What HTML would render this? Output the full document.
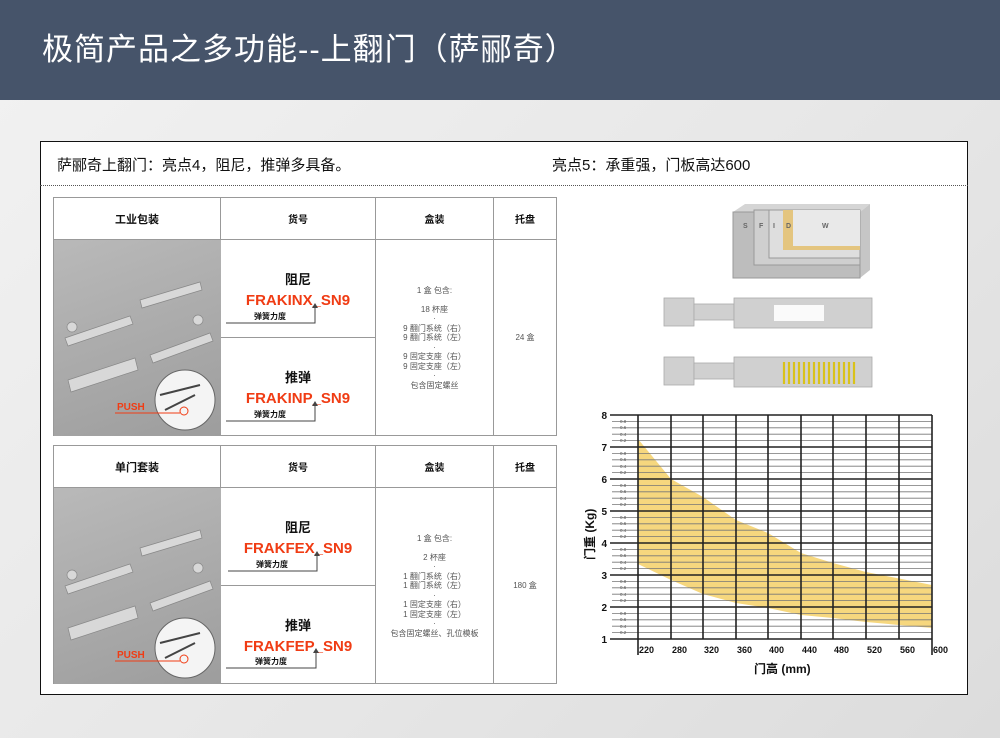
<!DOCTYPE html>
<html><head><meta charset="utf-8"><style>
*{margin:0;padding:0;box-sizing:border-box}
body{width:1000px;height:738px;overflow:hidden;position:relative;font-family:"Liberation Sans","Noto Sans CJK SC",sans-serif;background:linear-gradient(135deg,#f2f2f2,#e6e6e6 60%,#dcdcdc)}
.hdr{position:absolute;left:0;top:0;width:1000px;height:100px;background:#46546a;color:#fff;font-size:31px;line-height:100px;padding-left:42px;letter-spacing:1px;font-family:"Liberation Sans","WenQuanYi Zen Hei",sans-serif}
.box{position:absolute;left:40px;top:141px;width:928px;height:554px;background:#fff;border:1.5px solid #111}
.a{position:absolute}
.t{font-size:15px;color:#111;top:154px}
.dash{position:absolute;left:40px;top:185px;width:928px;border-top:1px dotted #555}
.tb{position:absolute;border:1px solid #999;background:#fff}
.c{position:absolute;border-right:1px solid #999;border-bottom:1px solid #999;text-align:center;display:flex;align-items:center;justify-content:center;flex-direction:column}
.hd{font-size:10px;font-weight:bold;color:#111}
.nm{font-size:13px;font-weight:bold;color:#111}
.code{font-size:15px;font-weight:bold;color:#f03c14;margin-top:4px}
.sm{font-size:8px;color:#555;line-height:9.5px}
.spr{position:absolute;font-size:8px;font-weight:bold;color:#111}
.photo{position:absolute;background:linear-gradient(160deg,#b9b9b9,#9d9d9d)}
</style></head><body>
<div class="hdr">极简产品之多功能--上翻门（萨郦奇）</div>
<div class="box"></div>
<div class="a t" style="left:57px">萨郦奇上翻门：亮点4，阻尼，推弹多具备。</div>
<div class="a t" style="left:552px">亮点5：承重强，门板高达600</div>
<div class="dash"></div>

<!-- table 1 -->
<div class="tb" style="left:53px;top:197px;width:504px;height:239px">
 <div class="c hd" style="left:0;top:0;width:167px;height:42px;font-size:11px">工业包装</div>
 <div class="c hd" style="left:167px;top:0;width:155px;height:42px">货号</div>
 <div class="c hd" style="left:322px;top:0;width:118px;height:42px">盒装</div>
 <div class="c hd" style="left:440px;top:0;width:62px;height:42px;border-right:none">托盘</div>
 <div class="photo" style="left:0;top:42px;width:167px;height:196px"></div>
 <div class="c" style="left:167px;top:42px;width:155px;height:98px"><div class="nm">阻尼</div><div class="code">FRAKINX_SN9</div></div>
 <div class="c" style="left:167px;top:140px;width:155px;height:98px;border-bottom:none"><div class="nm">推弹</div><div class="code">FRAKINP_SN9</div></div>
 <div class="c" style="left:322px;top:42px;width:118px;height:196px;border-bottom:none"><div class="sm">1 盒 包含:<br><br>18 杯座<br>·<br>9 翻门系统（右）<br>9 翻门系统（左）<br>·<br>9 固定支座（右）<br>9 固定支座（左）<br>·<br>包含固定螺丝</div></div>
 <div class="c sm" style="left:440px;top:42px;width:62px;height:196px;border:none">24 盒</div>
</div>
<!-- table 2 -->
<div class="tb" style="left:53px;top:445px;width:504px;height:239px">
 <div class="c hd" style="left:0;top:0;width:167px;height:42px;font-size:11px">单门套装</div>
 <div class="c hd" style="left:167px;top:0;width:155px;height:42px">货号</div>
 <div class="c hd" style="left:322px;top:0;width:118px;height:42px">盒装</div>
 <div class="c hd" style="left:440px;top:0;width:62px;height:42px;border-right:none">托盘</div>
 <div class="photo" style="left:0;top:42px;width:167px;height:196px"></div>
 <div class="c" style="left:167px;top:42px;width:155px;height:98px"><div class="nm">阻尼</div><div class="code">FRAKFEX_SN9</div></div>
 <div class="c" style="left:167px;top:140px;width:155px;height:98px;border-bottom:none"><div class="nm">推弹</div><div class="code">FRAKFEP_SN9</div></div>
 <div class="c" style="left:322px;top:42px;width:118px;height:196px;border-bottom:none"><div class="sm">1 盒 包含:<br><br>2 杯座<br>·<br>1 翻门系统（右）<br>1 翻门系统（左）<br>·<br>1 固定支座（右）<br>1 固定支座（左）<br>·<br>包含固定螺丝、孔位模板</div></div>
 <div class="c sm" style="left:440px;top:42px;width:62px;height:196px;border:none">180 盒</div>
</div>

<!-- spring labels + arrows, photos -->
<svg class="a" style="left:0;top:0" width="1000" height="738">
 <g fill="none" stroke="#444" stroke-width="1">
  <path d="M226 323H315V307"/><path d="M226 421H315V405"/>
  <path d="M228 571H317V555"/><path d="M226 668H316V652"/>
 </g>
 <g fill="#444"><path d="M312 308l3-5 3 5z"/><path d="M312 406l3-5 3 5z"/><path d="M314 556l3-5 3 5z"/><path d="M313 653l3-5 3 5z"/></g>
 <!-- hinges photo 1 -->
 <g id="h">
  <g fill="#d8d8d8" stroke="#888" stroke-width=".7">
   <path d="M140 300l60-18 2 8-60 18z"/><path d="M65 338l65-22 3 8-65 22z"/>
   <path d="M68 380l67-22 3 12-67 22z"/><path d="M150 355l60-22 3 8-60 22z"/>
   <circle cx="72" cy="327" r="5"/><circle cx="198" cy="320" r="5"/>
  </g>
  <circle cx="185" cy="400" r="30" fill="#f4f4f4" stroke="#666"/>
  <path d="M160 395l40-10M165 410l30-15" stroke="#444" stroke-width="2" fill="none"/>
  <text x="117" y="410" font-size="10" font-weight="bold" fill="#f03c14" font-family="Liberation Sans">PUSH</text>
  <path d="M115 413h65" stroke="#f03c14"/><circle cx="184" cy="411" r="4" fill="none" stroke="#f03c14"/>
 </g>
 <use href="#h" y="248"/>
 <!-- top-right diagrams -->
 <path d="M733 212l12-8h125l-10 8z" fill="#d5d5d5"/><path d="M860 212l10-8v66l-10 8z" fill="#c6c6c6"/>
 <rect x="733" y="212" width="127" height="66" fill="#bdbdbd" stroke="#999"/>
 <rect x="754" y="210" width="106" height="55" fill="#cfcfcf" stroke="#999"/>
 <rect x="769" y="210" width="91" height="48" fill="#dedede" stroke="#999"/>
 <rect x="783" y="210" width="77" height="40" fill="#e4c57f"/>
 <rect x="793" y="210" width="67" height="36" fill="#e9e9e9"/>
 <g font-size="7" fill="#666" font-weight="bold" font-family="Liberation Sans"><text x="743" y="228">S</text><text x="759" y="228">F</text><text x="773" y="228">I</text><text x="786" y="228">D</text><text x="822" y="228">W</text></g>
 <g fill="#d0d0d0" stroke="#aaa" stroke-width=".8">
  <rect x="664" y="298" width="30" height="28"/><rect x="694" y="304" width="40" height="16"/><rect x="734" y="298" width="138" height="30"/>
  <rect x="664" y="357" width="30" height="28"/><rect x="694" y="363" width="40" height="16"/><rect x="734" y="357" width="138" height="30"/>
 </g>
 <rect x="774" y="305" width="50" height="16" fill="#fafafa"/>
 <g stroke="#d9c21a" stroke-width="2.2"><path d="M784 362v22M789 362v22M794 362v22M799 362v22M804 362v22M809 362v22M814 362v22M819 362v22M824 362v22M829 362v22M834 362v22M839 362v22M844 362v22M849 362v22M854 362v22"/></g>
 <!-- chart -->
 <path d="M638 439L671 479 703 497 736 520 768 533 801 553 833 563 866 572 932 585 932 628 866 622 833 618 801 615 768 608 736 603 703 594 671 580 638 564Z" fill="#f6d77e"/>
 <g stroke="#777" stroke-width=".8">
  <path d="M612 421.4H932M612 427.8H932M612 434.2H932M612 440.6H932M612 453.4H932M612 459.8H932M612 466.2H932M612 472.6H932M612 485.4H932M612 491.8H932M612 498.2H932M612 504.6H932M612 517.4H932M612 523.8H932M612 530.2H932M612 536.6H932M612 549.4H932M612 555.8H932M612 562.2H932M612 568.6H932M612 581.4H932M612 587.8H932M612 594.2H932M612 600.6H932M612 613.4H932M612 619.8H932M612 626.2H932M612 632.6H932"/>
 </g>
 <g stroke="#222" stroke-width="1.6">
  <path d="M610 415H932M610 447H932M610 479H932M610 511H932M610 543H932M610 575H932M610 607H932M610 639H932"/>
  <path d="M638 415V655M671 415V639M703 415V639M736 415V639M768 415V639M801 415V639M833 415V639M866 415V639M899 415V639M932 415V655"/>
 </g>
 <g font-size="10" font-weight="bold" fill="#111" font-family="Liberation Sans" text-anchor="end">
  <text x="607" y="419">8</text><text x="607" y="451">7</text><text x="607" y="483">6</text><text x="607" y="515">5</text><text x="607" y="547">4</text><text x="607" y="579">3</text><text x="607" y="611">2</text><text x="607" y="643">1</text>
 </g>
 <g font-size="4.5" fill="#555" font-family="Liberation Sans">
  <text x="620" y="423">0.8</text><text x="620" y="429">0.6</text><text x="620" y="436">0.4</text><text x="620" y="442">0.2</text>
  <text x="620" y="455">0.8</text><text x="620" y="461">0.6</text><text x="620" y="468">0.4</text><text x="620" y="474">0.2</text>
  <text x="620" y="487">0.8</text><text x="620" y="493">0.6</text><text x="620" y="500">0.4</text><text x="620" y="506">0.2</text>
  <text x="620" y="519">0.8</text><text x="620" y="525">0.6</text><text x="620" y="532">0.4</text><text x="620" y="538">0.2</text>
  <text x="620" y="551">0.8</text><text x="620" y="557">0.6</text><text x="620" y="564">0.4</text><text x="620" y="570">0.2</text>
  <text x="620" y="583">0.8</text><text x="620" y="589">0.6</text><text x="620" y="596">0.4</text><text x="620" y="602">0.2</text>
  <text x="620" y="615">0.8</text><text x="620" y="621">0.6</text><text x="620" y="628">0.4</text><text x="620" y="634">0.2</text>
 </g>
 <g font-size="9" font-weight="bold" fill="#111" font-family="Liberation Sans">
  <text x="639" y="653">220</text><text x="672" y="653">280</text><text x="704" y="653">320</text><text x="737" y="653">360</text><text x="769" y="653">400</text><text x="802" y="653">440</text><text x="834" y="653">480</text><text x="867" y="653">520</text><text x="900" y="653">560</text><text x="933" y="653">600</text>
 </g>
 <text x="754" y="673" font-size="12" font-weight="bold" fill="#111" font-family="Liberation Sans,Noto Sans CJK SC,sans-serif">门高 (mm)</text>
 <text transform="translate(594,560) rotate(-90)" font-size="12" font-weight="bold" fill="#111" font-family="Liberation Sans,Noto Sans CJK SC,sans-serif">门重 (Kg)</text>
</svg>
<div class="spr" style="left:254px;top:311px">弹簧力度</div>
<div class="spr" style="left:254px;top:409px">弹簧力度</div>
<div class="spr" style="left:256px;top:559px">弹簧力度</div>
<div class="spr" style="left:255px;top:656px">弹簧力度</div>
</body></html>
